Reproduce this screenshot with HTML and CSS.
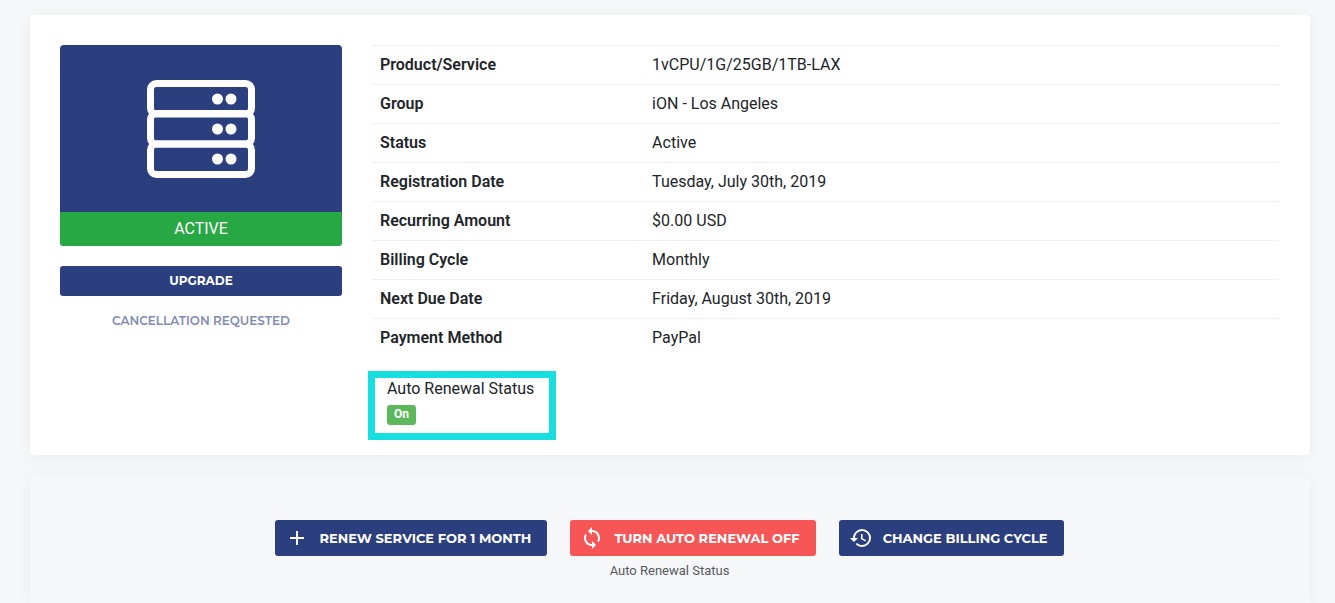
FILE: index.html
```html
<!DOCTYPE html>
<html lang="en">
<head>
<meta charset="utf-8">
<meta name="viewport" content="width=device-width, initial-scale=1">
<title>Product Details</title>
<link rel="stylesheet" href="styles.css">
</head>
<body>
<main class="page">
  <section class="card details">
    <div class="summary">
      <div class="product">
        <div class="product-icon">
          <svg width="108" height="98" viewBox="0 0 108 98" fill="none" stroke="#fff" stroke-width="7" aria-hidden="true">
            <rect x="3.5" y="3.5" width="101" height="30.5" rx="6"/>
            <rect x="3.5" y="33.5" width="101" height="30.5" rx="6"/>
            <rect x="3.5" y="64" width="101" height="30.5" rx="6"/>
            <g fill="#fff" stroke="none">
              <circle cx="70.500" cy="19" r="5.500"/><circle cx="84" cy="19" r="5.500"/>
              <circle cx="70.500" cy="49" r="5.500"/><circle cx="84" cy="49" r="5.500"/>
              <circle cx="70.500" cy="79" r="5.500"/><circle cx="84" cy="79" r="5.500"/>
            </g>
          </svg>
        </div>
        <div class="product-status">ACTIVE</div>
      </div>
      <button type="button" class="btn btn-block">UPGRADE</button>
      <button type="button" class="btn btn-block btn-plain" disabled>CANCELLATION REQUESTED</button>
    </div>
    <div class="info">
      <table class="info-table">
        <tbody>
          <tr><th scope="row">Product/Service</th><td>1vCPU/1G/25GB/1TB-LAX</td></tr>
          <tr><th scope="row">Group</th><td>iON - Los Angeles</td></tr>
          <tr><th scope="row">Status</th><td>Active</td></tr>
          <tr><th scope="row">Registration Date</th><td>Tuesday, July 30th, 2019</td></tr>
          <tr><th scope="row">Recurring Amount</th><td>$0.00 USD</td></tr>
          <tr><th scope="row">Billing Cycle</th><td>Monthly</td></tr>
          <tr><th scope="row">Next Due Date</th><td>Friday, August 30th, 2019</td></tr>
          <tr><th scope="row">Payment Method</th><td>PayPal</td></tr>
        </tbody>
      </table>
      <div class="renewal">
        <div class="renewal-label">Auto Renewal Status</div>
        <span class="badge">On</span>
      </div>
    </div>
  </section>
  <section class="card actions">
    <div class="action-row">
      <button type="button" class="btn btn-action">
        <svg class="icon" viewBox="0 0 24 24" aria-hidden="true"><path d="M19 13h-6v6h-2v-6H5v-2h6V5h2v6h6v2z"/></svg>
        RENEW SERVICE FOR 1 MONTH
      </button>
      <button type="button" class="btn btn-action btn-danger">
        <svg class="icon" viewBox="0 0 24 24" aria-hidden="true"><path d="M12 4V1L8 5l4 4V6c3.310 0 6 2.690 6 6 0 1.010-.25 1.970-.7 2.800l1.460 1.460C19.540 15.030 20 13.570 20 12c0-4.420-3.580-8-8-8zm0 14c-3.310 0-6-2.690-6-6 0-1.010.25-1.970.7-2.800L5.240 7.740C4.460 8.970 4 10.430 4 12c0 4.420 3.580 8 8 8v3l4-4-4-4v3z"/></svg>
        TURN AUTO RENEWAL OFF
      </button>
      <button type="button" class="btn btn-action">
        <svg class="icon" viewBox="0 0 24 24" aria-hidden="true"><path d="M13 3a9 9 0 0 0-9 9H1l3.890 3.890.07.140L9 12H6c0-3.870 3.130-7 7-7s7 3.130 7 7-3.130 7-7 7c-1.930 0-3.680-.79-4.940-2.060l-1.420 1.420A8.954 8.954 0 0 0 13 21a9 9 0 0 0 0-18zm-1 5v5l4.280 2.540.72-1.210-3.500-2.080V8H12z"/></svg>
        CHANGE BILLING CYCLE
      </button>
    </div>
    <div class="caption">Auto Renewal Status</div>
  </section>
</main>
</body>
</html>
```
FILE: styles.css
```css
* {
  box-sizing: border-box;
}

body {
  margin: 0;
  background: #f5f7f9;
  color: #212529;
  font-family: Roboto, "Liberation Sans", sans-serif;
  font-size: 16px;
  line-height: 22px;
}

.page {
  display: flex;
  flex-direction: column;
  gap: 20px;
  min-height: 100vh;
  padding: 15px 25px 0 30px;
}

.card {
  border-radius: 4px;
  box-shadow: 0 2px 16px rgba(0, 0, 0, 0.05);
}

.details {
  display: flex;
  gap: 30px;
  padding: 30px 31px 15px 30px;
  background: #fff;
}

.summary {
  flex: 0 0 282px;
}

.product {
  overflow: hidden;
  margin-bottom: 20px;
  border-radius: 4px;
  background: #2b3e7e;
  color: #fff;
  text-align: center;
}

.product-icon {
  display: flex;
  justify-content: center;
  padding: 35px 0 34px;
}

.product-status {
  padding: 6px 0;
  background: #28a745;
}

.btn {
  border: 0;
  border-radius: 3px;
  background: #2b3e7e;
  color: #fff;
  font-family: Montserrat, Inter, sans-serif;
  font-size: 13px;
  font-weight: 700;
  line-height: 20px;
  white-space: nowrap;
}

.btn-block {
  display: block;
  width: 100%;
  margin-bottom: 10px;
  padding: 5px 12px;
  font-size: 12px;
}

.btn-plain {
  background: none;
  color: #7f8bb1;
  font-weight: 600;
}

.info {
  flex: 1;
  min-width: 0;
}

.info-table {
  width: 100%;
  border-collapse: collapse;
  table-layout: fixed;
}

.info-table th,
.info-table td {
  padding: 8px;
  border-top: 1px solid #eff0f1;
  text-align: left;
}

.info-table th {
  width: 30%;
  font-weight: 600;
}

.renewal {
  width: fit-content;
  margin: 14px 0 0 -4px;
  padding: 0 15px 8px 12px;
  border: 7px solid #17dfdf;
}

.renewal-label {
  margin-bottom: 5px;
}

.badge {
  display: block;
  width: fit-content;
  padding: 0 7px 2px;
  border-radius: 3px;
  background: #5cb85c;
  color: #fff;
  font-size: 12px;
  font-weight: 700;
  line-height: 18px;
}

.actions {
  flex: 1;
  padding: 45px 31px 20px 30px;
  border-radius: 4px 4px 0 0;
  text-align: center;
}

.action-row {
  display: flex;
  flex-wrap: wrap;
  justify-content: center;
  gap: 23px;
}

.btn-action {
  display: flex;
  align-items: center;
  gap: 10px;
  height: 36px;
  padding: 0 16px 0 10px;
}

.btn-danger {
  background: #f65656;
}

.icon {
  width: 24px;
  height: 24px;
  fill: currentColor;
}

.caption {
  margin-top: 5px;
  color: #55595c;
  font-size: 13px;
  line-height: 20px;
}
```
